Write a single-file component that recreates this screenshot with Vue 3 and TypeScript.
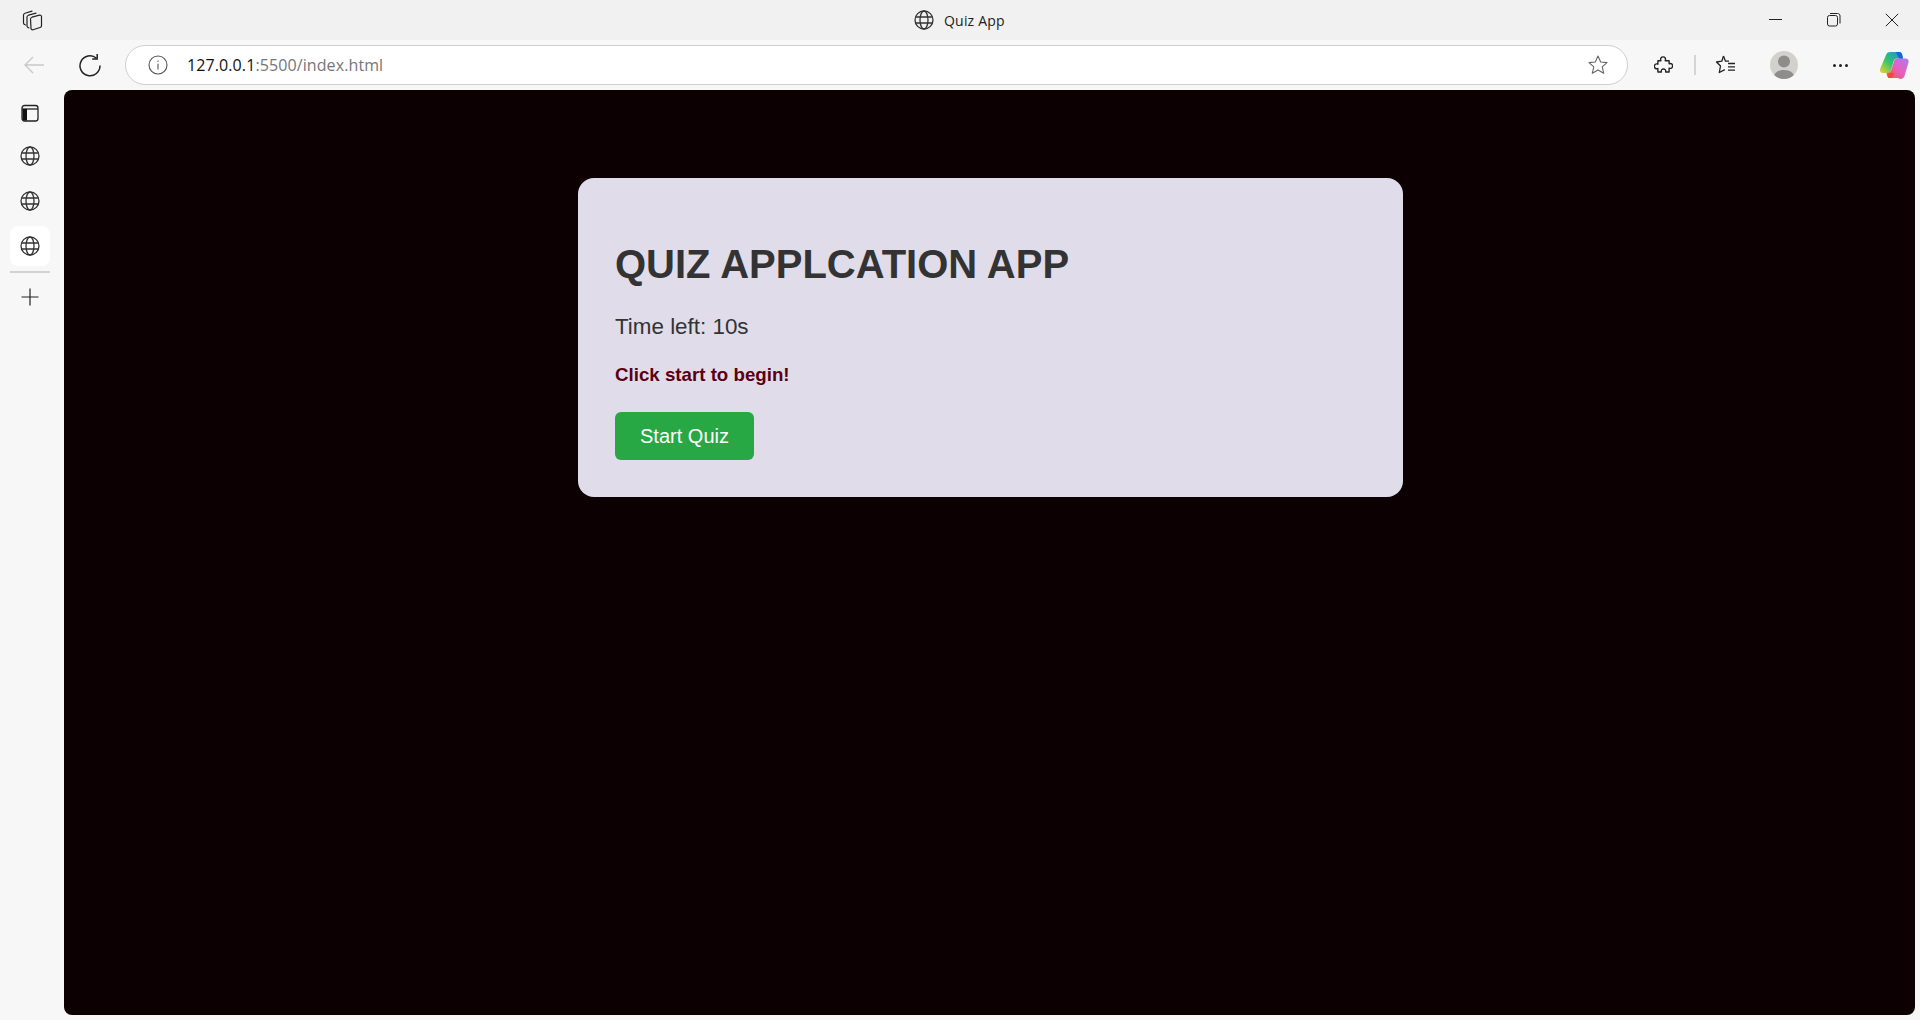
<script setup lang="ts">
const tabs = [false, false, true]
</script>

<template>
  <div class="window">
    <header class="titlebar">
      <svg class="workspaces" width="24" height="24" viewBox="0 0 24 24" fill="none" stroke="#222" stroke-width="1.2" stroke-linejoin="round" stroke-linecap="round">
        <path d="M4.500 17C3 16.500 2.500 16 2.500 15V7c0-1 .5-1.500 1.500-1.800L11 3.200" />
        <path d="M8 20C6.500 19.500 6 19 6 18V9c0-1 .5-1.500 1.500-1.800L15 5.200" />
        <path d="M9.500 11c0-1 .5-1.500 1.500-1.800l7.500-2c1.200-.3 2 .3 2 1.500v9c0 1-.5 1.500-1.500 1.800l-7 2.200c-1 .3-2-.3-2-1.500z" />
      </svg>
      <div class="title">
        <svg width="22" height="22" viewBox="0 0 22 22" fill="none" stroke="#333" stroke-width="1.3">
          <circle cx="11" cy="11" r="9" />
          <ellipse cx="11" cy="11" rx="4" ry="9" />
          <path d="M2.600 8h16.800M2.600 14h16.800" />
        </svg>
        <span>Quiz App</span>
      </div>
      <div class="controls">
        <svg width="14" height="14" viewBox="0 0 14 14" fill="none" stroke="#222" stroke-width="1"><path d="M0 6.500h13" /></svg>
        <svg width="14" height="14" viewBox="0 0 14 14" fill="none" stroke="#222" stroke-width="1">
          <rect x=".5" y="2.500" width="10" height="10.500" rx="2" />
          <path d="M3 .5h7.500c1.600 0 2.500.9 2.500 2.500v7.500" />
        </svg>
        <svg width="14" height="14" viewBox="0 0 14 14" fill="none" stroke="#222" stroke-width="1"><path d="m.8.8 12.400 12.400M13.200.8.800 13.200" /></svg>
      </div>
    </header>

    <div class="toolbar">
      <svg class="back" width="24" height="24" viewBox="0 0 24 24" fill="none" stroke="#c9c9c9" stroke-width="1.400"><path d="M22 12H3M11 4l-8 8 8 8" /></svg>
      <svg class="reload" width="24" height="24" viewBox="0 0 24 24" fill="none" stroke="#222" stroke-width="1.500">
        <path d="M18.500 5.200A10 10 0 1 0 22 12.500" />
        <path d="M19.200 1v5h-5" />
      </svg>
      <div class="address">
        <svg width="20" height="20" viewBox="0 0 20 20" fill="none" stroke="#555" stroke-width="1.100">
          <circle cx="10" cy="10" r="9" />
          <path d="M10 8.800v5.600M10 5.400v1.400" />
        </svg>
        <span class="url"><span class="host">127.0.0.1</span>:5500/index.html</span>
        <svg class="star" width="22" height="22" viewBox="0 0 22 22" fill="none" stroke="#666" stroke-width="1.100" stroke-linejoin="round">
          <path d="m11 2 2.700 6 6.300.6-4.800 4.200 1.500 6.400L11 16l-5.700 3.200 1.500-6.400L2 8.600 8.300 8z" />
        </svg>
      </div>
      <div class="tools">
        <svg class="puzzle" width="19" height="21" viewBox="0 0 22 24" fill="none" stroke="#222" stroke-width="1.600" stroke-linejoin="round">
          <path d="M4.500 6.500H8C7 3.500 8.500 2 10.500 2S14 3.500 13 6.500H17.500V10C20 9 21.500 10.500 21.500 12.500S20 16 17.500 15V19.500H13.500C14 17 12.500 16 11 16S8 17 8.500 19.500H4.500V15.500C2 16.500 .5 15 .5 13S2 9.500 4.500 10.500Z" />
        </svg>
        <span class="sep"></span>
        <svg class="favs" width="22" height="22" viewBox="0 0 22 22" fill="none" stroke="#222" stroke-width="1.300" stroke-linejoin="round">
          <path d="M8.500 2 6.800 7.200 1.500 8l4 4L4.300 18.500 9.800 15.700" />
          <path d="M8.500 2l2 5.200h3.500" />
          <path d="M13 9.500h7M13 12.800h7M13 16.200h7" />
        </svg>
        <div class="avatar">
          <svg width="28" height="28" viewBox="0 0 28 28" fill="#8f8d89">
            <circle cx="14" cy="10.500" r="6" />
            <path d="M3.500 28c0-6 4-9 10.500-9s10.500 3 10.500 9z" />
          </svg>
        </div>
        <div class="more"><i></i><i></i><i></i></div>
        <svg class="copilot" width="30" height="30" viewBox="0 0 30 30">
          <defs>
            <linearGradient id="cpA" x1="0" y1="1" x2="1" y2="0">
              <stop offset="0" stop-color="#f2d22e" />
              <stop offset=".45" stop-color="#35c46a" />
              <stop offset="1" stop-color="#1a8fe8" />
            </linearGradient>
            <linearGradient id="cpB" x1="0" y1="1" x2="1" y2="0">
              <stop offset="0" stop-color="#f0563a" />
              <stop offset=".5" stop-color="#e95fc0" />
              <stop offset="1" stop-color="#a77cf0" />
            </linearGradient>
          </defs>
          <path d="M11 2h9c1.500 0 2.500.8 3 2.200l1 4.300H18c-2 0-3 1-3.500 3l-2.500 9c-.5 1.600-1.500 2.500-3 2.500H4c-2.500 0-3.500-2-3-4L7 5c.7-2 2-3 4-3z" fill="url(#cpA)" />
          <path d="M19 28h-8c-1.500 0-2.500-.8-3-2.200L7.500 23c2.500 0 4-.8 4.800-3l2.700-9c.5-1.600 1.500-2.500 3-2.500h8.500c2.500 0 3.500 2 3 4l-4 13.500c-.7 2-2 3-4.500 3z" fill="url(#cpB)" />
          <path d="M17 2h3c1.500 0 2.500.8 3 2.200l1 4.300h-4z" fill="#1c63d8" />
          <path d="M9 28h2.500c1 0 2-.6 2.500-2l1-3h-5z" fill="#ef4b2f" />
        </svg>
      </div>
    </div>

    <div class="body">
      <aside class="sidebar">
        <div class="side-btn">
          <svg width="20" height="20" viewBox="0 0 20 20" fill="none" stroke="#222" stroke-width="1.300">
            <rect x="2" y="2.500" width="16" height="15.500" rx="2.500" />
            <path d="M2 6h16" />
            <path d="M2.500 6h4.500v11.500H4.500a2 2 0 0 1-2-2z" fill="#111" stroke="none" />
          </svg>
        </div>
        <div v-for="(active, i) in tabs" :key="i" class="side-btn" :class="{ active }">
          <svg width="22" height="22" viewBox="0 0 22 22" fill="none" stroke="#333" stroke-width="1.300">
            <circle cx="11" cy="11" r="9" />
            <ellipse cx="11" cy="11" rx="4" ry="9" />
            <path d="M2.600 8h16.800M2.600 14h16.800" />
          </svg>
        </div>
        <div class="side-rule"></div>
        <svg class="plus" width="20" height="20" viewBox="0 0 20 20" fill="none" stroke="#222" stroke-width="1.200"><path d="M10 1.500v17M1.500 10h17" /></svg>
      </aside>

      <main class="page">
        <section class="card">
          <h1>QUIZ APPLCATION APP</h1>
          <p class="timer">Time left: 10s</p>
          <p class="status">Click start to begin!</p>
          <button class="start" type="button">Start Quiz</button>
        </section>
      </main>
    </div>
  </div>
</template>

<style>
html, body {
  margin: 0;
  height: 100%;
  overflow: hidden;
}
</style>

<style scoped>
.window {
  width: 1920px;
  height: 1020px;
  display: flex;
  flex-direction: column;
  background: #f7f7f7;
  font-family: "Open Sans", "Liberation Sans", sans-serif;
}

.titlebar {
  height: 40px;
  flex: none;
  background: #f1f1f1;
  display: flex;
  align-items: center;
  position: relative;
  padding: 0 20px 0 21px;
}

.title {
  position: absolute;
  left: 913px;
  top: 9px;
  display: flex;
  align-items: center;
  gap: 9px;
  font-size: 14px;
  letter-spacing: .2px;
  color: #222;
}

.controls {
  margin-left: auto;
  display: flex;
  gap: 44px;
  padding-right: 1px;
}

.toolbar {
  height: 50px;
  flex: none;
  display: flex;
  align-items: center;
  padding: 0 4px 0 22px;
  box-sizing: border-box;
}

.reload {
  margin-left: 32px;
}

.address {
  width: 1503px;
  height: 40px;
  margin-left: 23px;
  box-sizing: border-box;
  border: 1px solid #cfcfcf;
  border-radius: 20px;
  background: #fff;
  display: flex;
  align-items: center;
  padding: 0 18px 0 22px;
}

.url {
  margin-left: 19px;
  font-size: 16px;
  color: #76767a;
  letter-spacing: .1px;
}

.host {
  color: #111;
}

.star {
  margin-left: auto;
}

.tools {
  display: flex;
  align-items: center;
  margin-left: 25px;
}

.puzzle {
  margin: 0 2px 0 1px;
}

.sep {
  width: 2px;
  height: 20px;
  margin: 0 19px;
  background: #d4d4d4;
}

.avatar {
  width: 28px;
  height: 28px;
  margin-left: 33px;
  border-radius: 50%;
  background: #d2d1cd;
  overflow: hidden;
}

.more {
  display: flex;
  gap: 3px;
  margin-left: 35px;
}

.more i {
  width: 3px;
  height: 3px;
  border-radius: 50%;
  background: #222;
}

.copilot {
  margin-left: 31px;
}

.body {
  flex: 1;
  min-height: 0;
  display: flex;
  padding: 0 5px 5px 0;
}

.sidebar {
  width: 64px;
  flex: none;
  box-sizing: border-box;
  padding-right: 4px;
  display: flex;
  flex-direction: column;
  align-items: center;
}

.side-btn {
  width: 40px;
  height: 40px;
  margin-bottom: 5px;
  border-radius: 8px;
  display: flex;
  align-items: center;
  justify-content: center;
}

.side-btn:first-child {
  margin-top: 3px;
  margin-bottom: 3px;
}

.side-btn.active {
  background: #fff;
}

.side-rule {
  width: 40px;
  height: 2px;
  background: #d2d2d2;
}

.plus {
  margin-top: 14px;
}

.page {
  flex: 1;
  min-width: 0;
  background: #0c0002;
  border-radius: 8px;
  display: flex;
  justify-content: center;
  align-items: flex-start;
  padding-top: 88px;
  padding-left: 2px;
  font-family: "Liberation Sans", Arial, sans-serif;
}

.card {
  width: 825px;
  height: 319px;
  box-sizing: border-box;
  padding: 37px;
  background: #e0dcea;
  border-radius: 16px;
  color: #333;
}

h1 {
  margin: 26px 0 0;
  font-size: 40px;
  line-height: 46px;
  font-weight: 700;
  color: #333;
}

.timer {
  margin: 27px 0 0;
  font-size: 22.400px;
  line-height: 26px;
}

.status {
  margin: 24px 0 0;
  font-size: 18.720px;
  line-height: 22px;
  font-weight: 700;
  color: #5c0011;
}

.start {
  display: block;
  margin-top: 26px;
  width: 139px;
  height: 48px;
  padding: 0;
  border: none;
  border-radius: 6px;
  background: #28a745;
  color: #fff;
  font-family: inherit;
  font-size: 20px;
  cursor: pointer;
}
</style>
